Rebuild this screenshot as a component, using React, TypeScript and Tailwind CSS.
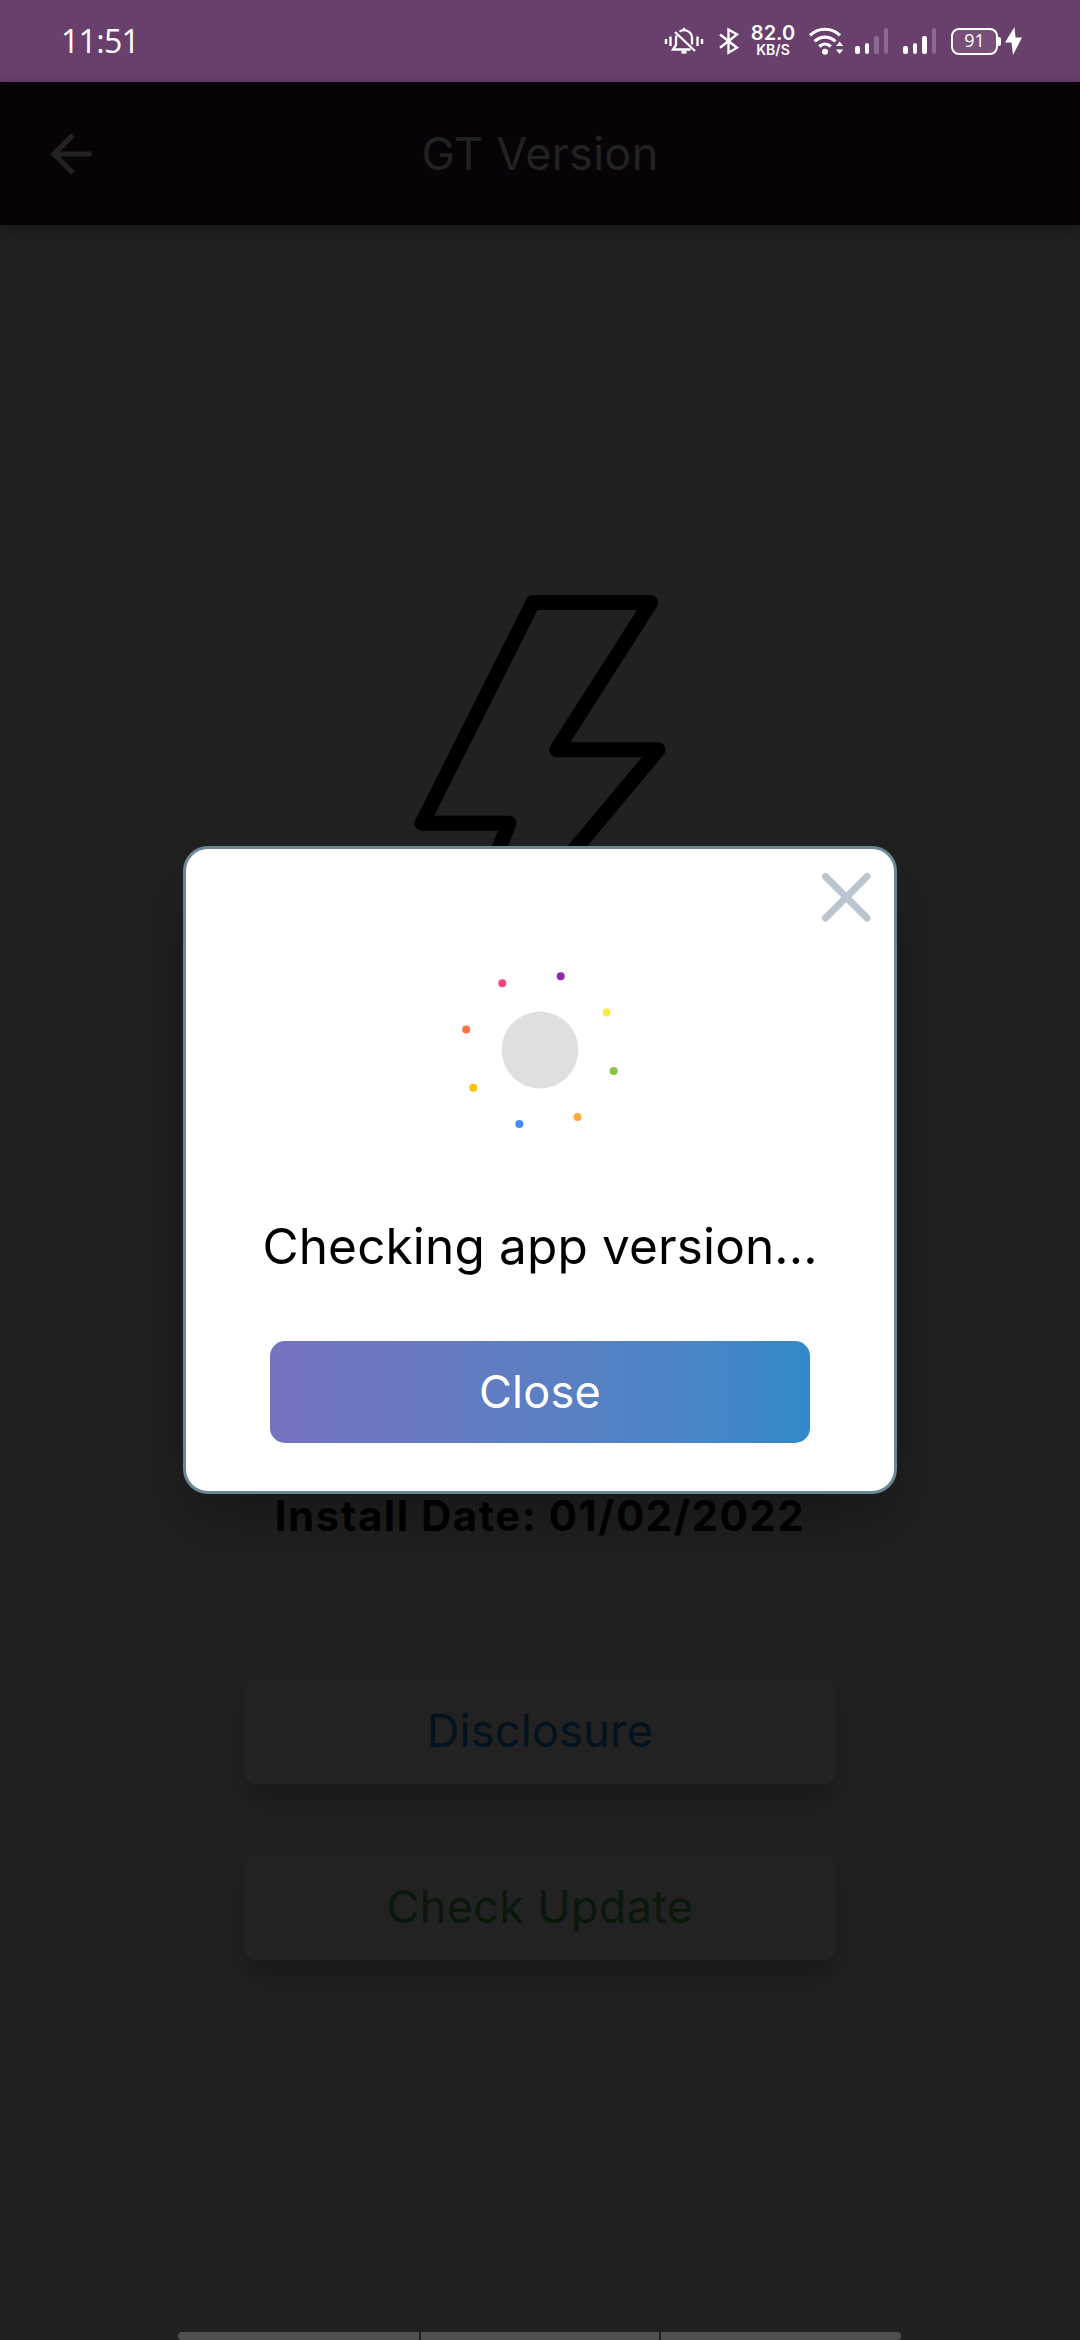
const spinnerDots = [
  { cx: 62.3, cy: 33.3, fill: "#ff4081" },
  { cx: 120.7, cy: 26.3, fill: "#9027ac" },
  { cx: 166.7, cy: 62.6, fill: "#ffeb3b" },
  { cx: 173.7, cy: 121, fill: "#8bc34a" },
  { cx: 137.5, cy: 167, fill: "#ffab40" },
  { cx: 79.3, cy: 174, fill: "#448aff" },
  { cx: 33.2, cy: 137.7, fill: "#ffc107" },
  { cx: 26.2, cy: 79.5, fill: "#ff7043" },
];

function MutedBell() {
  return (
    <svg className="h-[28px] w-[40px]" viewBox="0 0 40 28" fill="none" stroke="white" strokeWidth="2.3">
      <path d="M2 12v5M6.5 9.5v9.500M33.500 9.500v9.500M38 12v5" strokeWidth="2.400" />
      <path d="M15.500 4.600a8 8 0 0 1 12.500 6.400v6.500M12.600 8.500c-.4 1-.6 2-.6 3.500v6l-3 4.500h17.500" />
      <path d="M11 5l20 19" />
      <path d="M17.500 25.200h5" strokeWidth="2.800" />
      <path d="M20 .8v2.500" />
    </svg>
  );
}

function Bluetooth() {
  return (
    <svg className="h-[28px] w-[22px]" viewBox="0 0 22 28" fill="none" stroke="white" strokeWidth="2.4">
      <path d="M2 7.500l17 13.200-8.500 5V2.500l8.500 5L2 20.700" />
    </svg>
  );
}

function Wifi() {
  return (
    <svg className="h-[30px] w-[38px]" viewBox="0 0 38 30" fill="none" stroke="white" strokeWidth="3.200">
      <path d="M2 9.400c8-8.200 22-8.200 30 0M6.500 15.300c6-5.700 15-5.700 21 0M11.300 20.500c3.500-3.200 8-3.200 11.500 0" />
      <circle cx="17" cy="25.700" r="3" fill="white" stroke="none" />
      <path d="M28 20l3.600-4.600 3.600 4.600zM28 23.500l3.600 4.600 3.600-4.600z" fill="white" stroke="none" />
    </svg>
  );
}

function Signal({ strong }: { strong: boolean }) {
  return (
    <div className="flex h-[26px] w-[34px] items-end gap-[5px]">
      <div className="h-[8px] w-[4.500px] rounded-[2px] bg-white" />
      <div className="h-[11px] w-[4.500px] rounded-[2px] bg-white" />
      <div className={strong ? "h-[18px] w-[4.500px] rounded-[2px] bg-white" : "h-[18px] w-[4.500px] rounded-[2px] bg-[#8b6a92]"} />
      <div className="h-[26px] w-[4.500px] rounded-[2px] bg-[#8b6a92]" />
    </div>
  );
}

function StatusBar() {
  return (
    <div className="flex h-[82px] w-full items-center bg-[#69406b] pl-[61px] text-white">
      <span className="w-[603px] font-['Open_Sans',sans-serif] text-[32px] leading-[32px] tracking-[-0.7px]">11:51</span>
      <MutedBell />
      <div className="ml-[14px]"><Bluetooth /></div>
      <div className="ml-[10px] flex w-[46px] flex-col items-center font-['Inter',sans-serif] font-semibold">
        <span className="text-[20px] leading-[16px]">82.0</span>
        <span className="mt-[1px] text-[14px] leading-[15px]">KB/S</span>
      </div>
      <div className="ml-[12px]"><Wifi /></div>
      <div className="ml-[9px]"><Signal strong={false} /></div>
      <div className="ml-[14px]"><Signal strong /></div>
      <div className="ml-[14px] flex h-[27px] w-[47px] items-center justify-center rounded-[8px] border-[2.500px] border-white bg-[#785078] pb-[2px] font-['Open_Sans',sans-serif] text-[18px] leading-none">
        91
      </div>
      <div className="h-[9px] w-[3px] rounded-r-[2px] bg-white" />
      <svg className="ml-[4px] h-[28px] w-[17px]" viewBox="0 0 17 28" fill="white">
        <path d="M9.500 0 0 15.500h6.500L8 28l9-17.500h-6.500z" />
      </svg>
    </div>
  );
}

function Header() {
  return (
    <header className="relative grid h-[143px] w-full grid-cols-[143px_1fr_143px] items-center bg-[#080307] text-[#222222] shadow-[0_4px_16px_rgba(0,0,0,0.35)]">
      <svg className="ml-[40px] size-[62px]" viewBox="0 0 24 24" fill="currentColor">
        <path d="M20 11H7.830l5.590-5.590L12 4l-8 8 8 8 1.410-1.410L7.830 13H20v-2z" />
      </svg>
      <h1 className="text-center text-[45px] leading-[60px] tracking-[0.3px]">GT Version</h1>
    </header>
  );
}

function CheckingDialog() {
  return (
    <div className="absolute top-[846px] left-[183px] flex h-[648px] w-[714px] flex-col items-center rounded-[25px] border-[3px] border-[#6b8792] bg-white shadow-[0_28px_60px_rgba(0,0,0,0.300)]">
      <svg className="mt-[21px] mr-[21px] size-[54px] self-end" viewBox="0 0 54 54" stroke="#bac5d0" strokeWidth="7" strokeLinecap="round">
        <path d="M6.500 6.500l41.500 41.500M48 6.500L6.500 48" />
      </svg>
      <svg className="mt-[26px] size-[200px]" viewBox="0 0 200 200">
        <circle cx="100" cy="100" r="38.400" fill="#dfdfdf" />
        {spinnerDots.map((dot) => (
          <circle key={dot.fill} cx={dot.cx} cy={dot.cy} r="4" fill={dot.fill} />
        ))}
      </svg>
      <p className="mt-[66px] text-[49.500px] leading-[60px] tracking-[0.15px] whitespace-nowrap text-black">Checking app version...</p>
      <button className="mt-[65px] h-[102px] w-[540px] rounded-[15px] bg-linear-to-r from-[#7573bf] to-[#3389c8] text-[45px] leading-[60px] tracking-[0.3px] text-white">
        Close
      </button>
    </div>
  );
}

export default function App() {
  return (
    <div className="relative flex h-[2340px] w-[1080px] flex-col overflow-hidden bg-[#212121] font-['Inter',sans-serif]">
      <StatusBar />
      <Header />
      <main className="flex flex-1 flex-col items-center">
        <svg className="mt-[363px] h-[450px] w-[280px]" viewBox="400 588 280 450" fill="none" stroke="black" strokeWidth="15" strokeLinejoin="round">
          <path d="M533 602.500H650.700L556.700 749.800H658L431 1021L509 823.300H422z" />
        </svg>
        <p className="mt-[448px] text-[42px] leading-[60px] font-bold tracking-[1.5px] whitespace-nowrap text-[#020202]">
          Install Date: 01/02/2022
        </p>
        <button className="mt-[132px] h-[106px] w-[592px] rounded-[12px] bg-[#222222] text-[45px] leading-[60px] tracking-[0.3px] text-[#03121f] shadow-[0_18px_26px_-2px_rgba(0,0,0,0.280)]">
          Disclosure
        </button>
        <button className="mt-[70px] h-[106px] w-[592px] rounded-[12px] bg-[#222222] text-[45px] leading-[60px] tracking-[0.3px] text-[#0a180b] shadow-[0_18px_26px_-2px_rgba(0,0,0,0.280)]">
          Check Update
        </button>
        <div className="mt-auto mr-[1px] flex h-[8px] w-[723px] gap-[2px] overflow-hidden rounded-[5px]">
          <div className="w-[241px] bg-[#515151]" />
          <div className="w-[238px] bg-[#515151]" />
          <div className="flex-1 bg-[#515151]" />
        </div>
      </main>
      <CheckingDialog />
    </div>
  );
}
